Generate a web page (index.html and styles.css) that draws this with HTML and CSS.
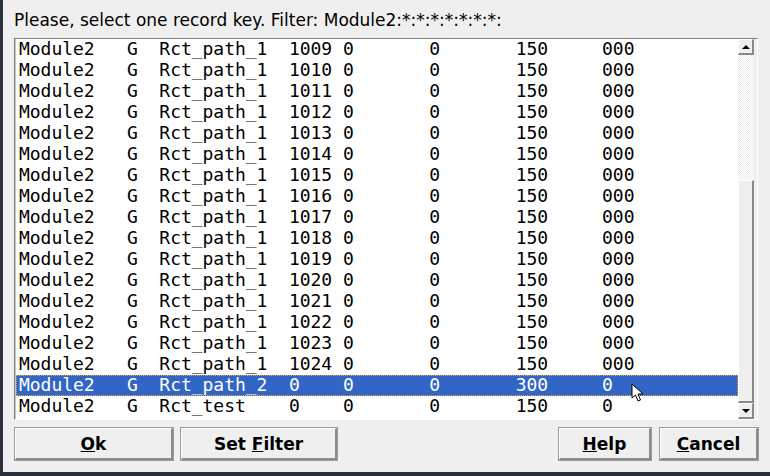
FILE: index.html
```html
<!DOCTYPE html>
<html>
<head>
<meta charset="utf-8">
<link rel="stylesheet" href="styles.css">
</head>
<body>
<div class="window">
  <div class="title">Please, select one record key. Filter: Module2:*:*:*:*:*:*:*:</div>
  <div class="listframe">
    <div class="list">
      <div class="row">Module2   G  Rct_path_1  1009 0       0       150     000</div>
      <div class="row">Module2   G  Rct_path_1  1010 0       0       150     000</div>
      <div class="row">Module2   G  Rct_path_1  1011 0       0       150     000</div>
      <div class="row">Module2   G  Rct_path_1  1012 0       0       150     000</div>
      <div class="row">Module2   G  Rct_path_1  1013 0       0       150     000</div>
      <div class="row">Module2   G  Rct_path_1  1014 0       0       150     000</div>
      <div class="row">Module2   G  Rct_path_1  1015 0       0       150     000</div>
      <div class="row">Module2   G  Rct_path_1  1016 0       0       150     000</div>
      <div class="row">Module2   G  Rct_path_1  1017 0       0       150     000</div>
      <div class="row">Module2   G  Rct_path_1  1018 0       0       150     000</div>
      <div class="row">Module2   G  Rct_path_1  1019 0       0       150     000</div>
      <div class="row">Module2   G  Rct_path_1  1020 0       0       150     000</div>
      <div class="row">Module2   G  Rct_path_1  1021 0       0       150     000</div>
      <div class="row">Module2   G  Rct_path_1  1022 0       0       150     000</div>
      <div class="row">Module2   G  Rct_path_1  1023 0       0       150     000</div>
      <div class="row">Module2   G  Rct_path_1  1024 0       0       150     000</div>
      <div class="row selected">Module2   G  Rct_path_2  0    0       0       300     0</div>
      <div class="row">Module2   G  Rct_test    0    0       0       150     0</div>
    </div>
    <div class="scrollbar">
      <div class="arrow"><svg width="10" height="6" viewBox="0 0 10 6"><polygon points="1,5 9,5 5,1" fill="#000"/></svg></div>
      <div class="trough">
        <div class="gap"></div>
        <div class="thumb"></div>
      </div>
      <div class="arrow"><svg width="10" height="6" viewBox="0 0 10 6"><polygon points="1,1 9,1 5,5" fill="#000"/></svg></div>
    </div>
  </div>
  <div class="buttons">
    <button class="btn btn-ok"><u>O</u>k</button>
    <button class="btn btn-filter">Set <u>F</u>ilter</button>
    <div class="spacer"></div>
    <button class="btn btn-help"><u>H</u>elp</button>
    <button class="btn btn-cancel"><u>C</u>ancel</button>
  </div>
</div>
<svg class="cursor" width="14" height="20" viewBox="0 0 14 20"><polygon points="1,1 1,15 4.5,12 7,18 9.5,17 7,11 12,11" fill="#fff" stroke="#000" stroke-width="1"/></svg>
</body>
</html>
```
FILE: styles.css
```css
html, body {
  margin: 0;
  padding: 0;
  background: #2b2f37;
}
.window {
  box-sizing: border-box;
  width: 767px;
  height: 472px;
  margin-left: 3px;
  background: #efefef;
  padding: 0 12px 0 11px;
  font-family: "DejaVu Sans", sans-serif;
  color: #000;
  display: flex;
  flex-direction: column;
}
.title {
  font-size: 17px;
  height: 38px;
  line-height: 40px;
  white-space: nowrap;
}
.listframe {
  display: flex;
  height: 382px;
  box-sizing: border-box;
  border-top: 1px solid #7c7c7c;
  border-left: 1px solid #7c7c7c;
  border-bottom: 1px solid #ffffff;
  border-right: 1px solid #ffffff;
}
.list {
  width: 722px;
  background: #fff;
  border-left: 1px solid #c8c8c8;
  font-family: "DejaVu Sans Mono", monospace;
  font-size: 18px;
  line-height: 20px;
  letter-spacing: -0.04px;
}
.row {
  height: 21px;
  white-space: pre;
  padding-left: 3px;
  box-sizing: border-box;
}
.row.selected {
  background: #3166c6;
  color: #fff;
  outline: 1px dotted #e6a23c;
  outline-offset: -1px;
}
.scrollbar {
  width: 16px;
  display: flex;
  flex-direction: column;
  background: #efefef;
}
.arrow {
  height: 16px;
  box-sizing: border-box;
  border-top: 1px solid #ffffff;
  border-left: 1px solid #ffffff;
  border-right: 2px solid #8a8a8a;
  border-bottom: 2px solid #8a8a8a;
  background: #efefef;
  display: flex;
  align-items: center;
  justify-content: center;
}
.trough {
  flex: 1;
  display: flex;
  flex-direction: column;
  background: repeating-conic-gradient(#ececec 0 25%, #ffffff 0 50%) 0 0 / 2px 2px;
}
.gap {
  height: 125px;
}
.thumb {
  flex: 1;
  box-sizing: border-box;
  border-top: 1px solid #ffffff;
  border-left: 1px solid #ffffff;
  border-right: 2px solid #8a8a8a;
  border-bottom: 2px solid #8a8a8a;
  background: #efefef;
}
.buttons {
  display: flex;
  margin-top: 8px;
  height: 32px;
}
.btn {
  box-sizing: border-box;
  height: 32px;
  font-family: "DejaVu Sans", sans-serif;
  font-weight: bold;
  font-size: 17px;
  color: #000;
  background: #efefef;
  border-top: 1px solid #ffffff;
  border-left: 1px solid #ffffff;
  border-right: 2px solid #8c8c8c;
  border-bottom: 2px solid #8c8c8c;
  box-shadow: 0 0 0 1px #9a9a9a;
  padding: 0;
}
.btn-ok { width: 158px; margin-left: 1px; }
.btn-filter { width: 156px; margin-left: 8px; }
.spacer { flex: 1; }
.btn-help { width: 92px; }
.btn-cancel { width: 98px; margin-left: 9px; }
.cursor {
  position: absolute;
  left: 631px;
  top: 383px;
}
```
